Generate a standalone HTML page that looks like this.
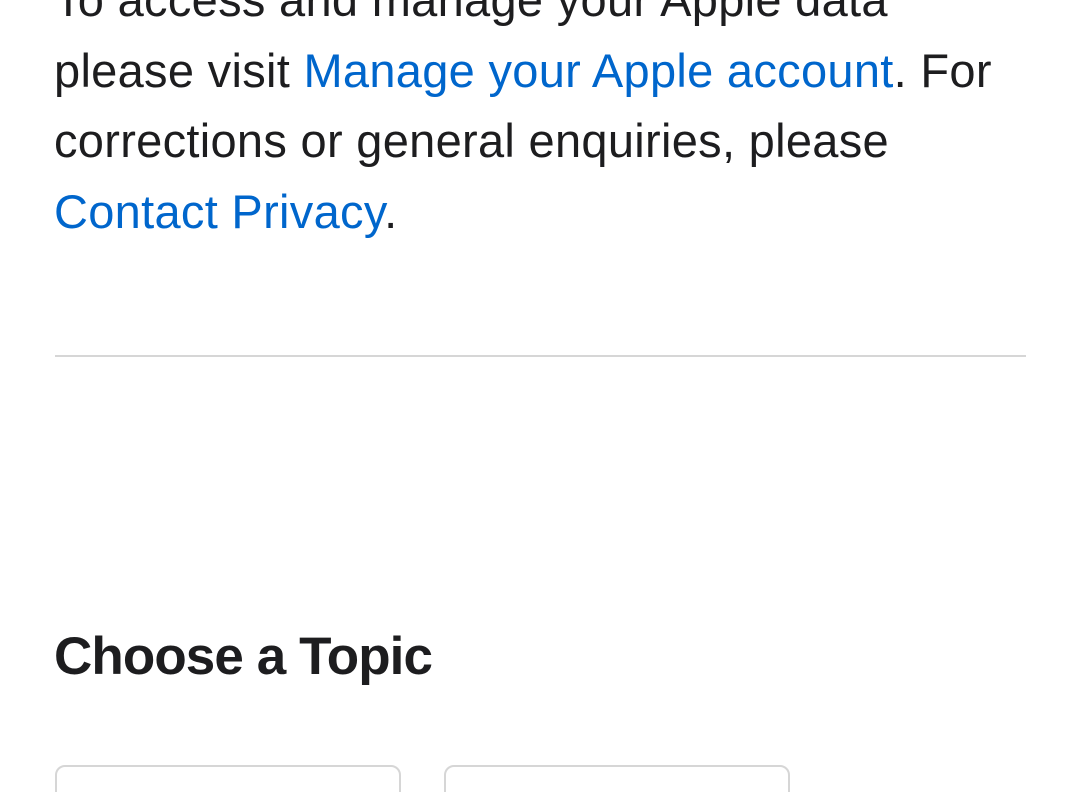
<!DOCTYPE html>
<html><head><meta charset="utf-8"><style>
html,body{margin:0;padding:0;background:#fff;width:1080px;height:792px;overflow:hidden;position:relative}
body{font-family:"Liberation Sans",Arial,sans-serif;color:#1d1d1f}
.l{position:absolute;left:54px;font-size:47px;letter-spacing:0.3px;white-space:nowrap;line-height:1}
a{color:#0066cc;text-decoration:none}
.hr{position:absolute;left:55px;top:355px;width:971px;height:2px;background:#d6d6d6}
h2{position:absolute;left:54px;top:630px;margin:0;font-size:53px;font-weight:bold;line-height:1;letter-spacing:-0.9px;white-space:nowrap}
.c{position:absolute;top:765px;width:342px;height:60px;border:2px solid #d6d6d6;border-radius:10px}
</style></head><body>
<div class="l" style="top:-24px">To access and manage your Apple data</div>
<div class="l" style="top:47px">please visit <a>Manage your Apple account</a>. For</div>
<div class="l" style="top:117px">corrections or general enquiries, please</div>
<div class="l" style="top:188px"><a>Contact Privacy</a>.</div>
<div class="hr"></div>
<h2>Choose a Topic</h2>
<div class="c" style="left:55px"></div>
<div class="c" style="left:444px"></div>
</body></html>
